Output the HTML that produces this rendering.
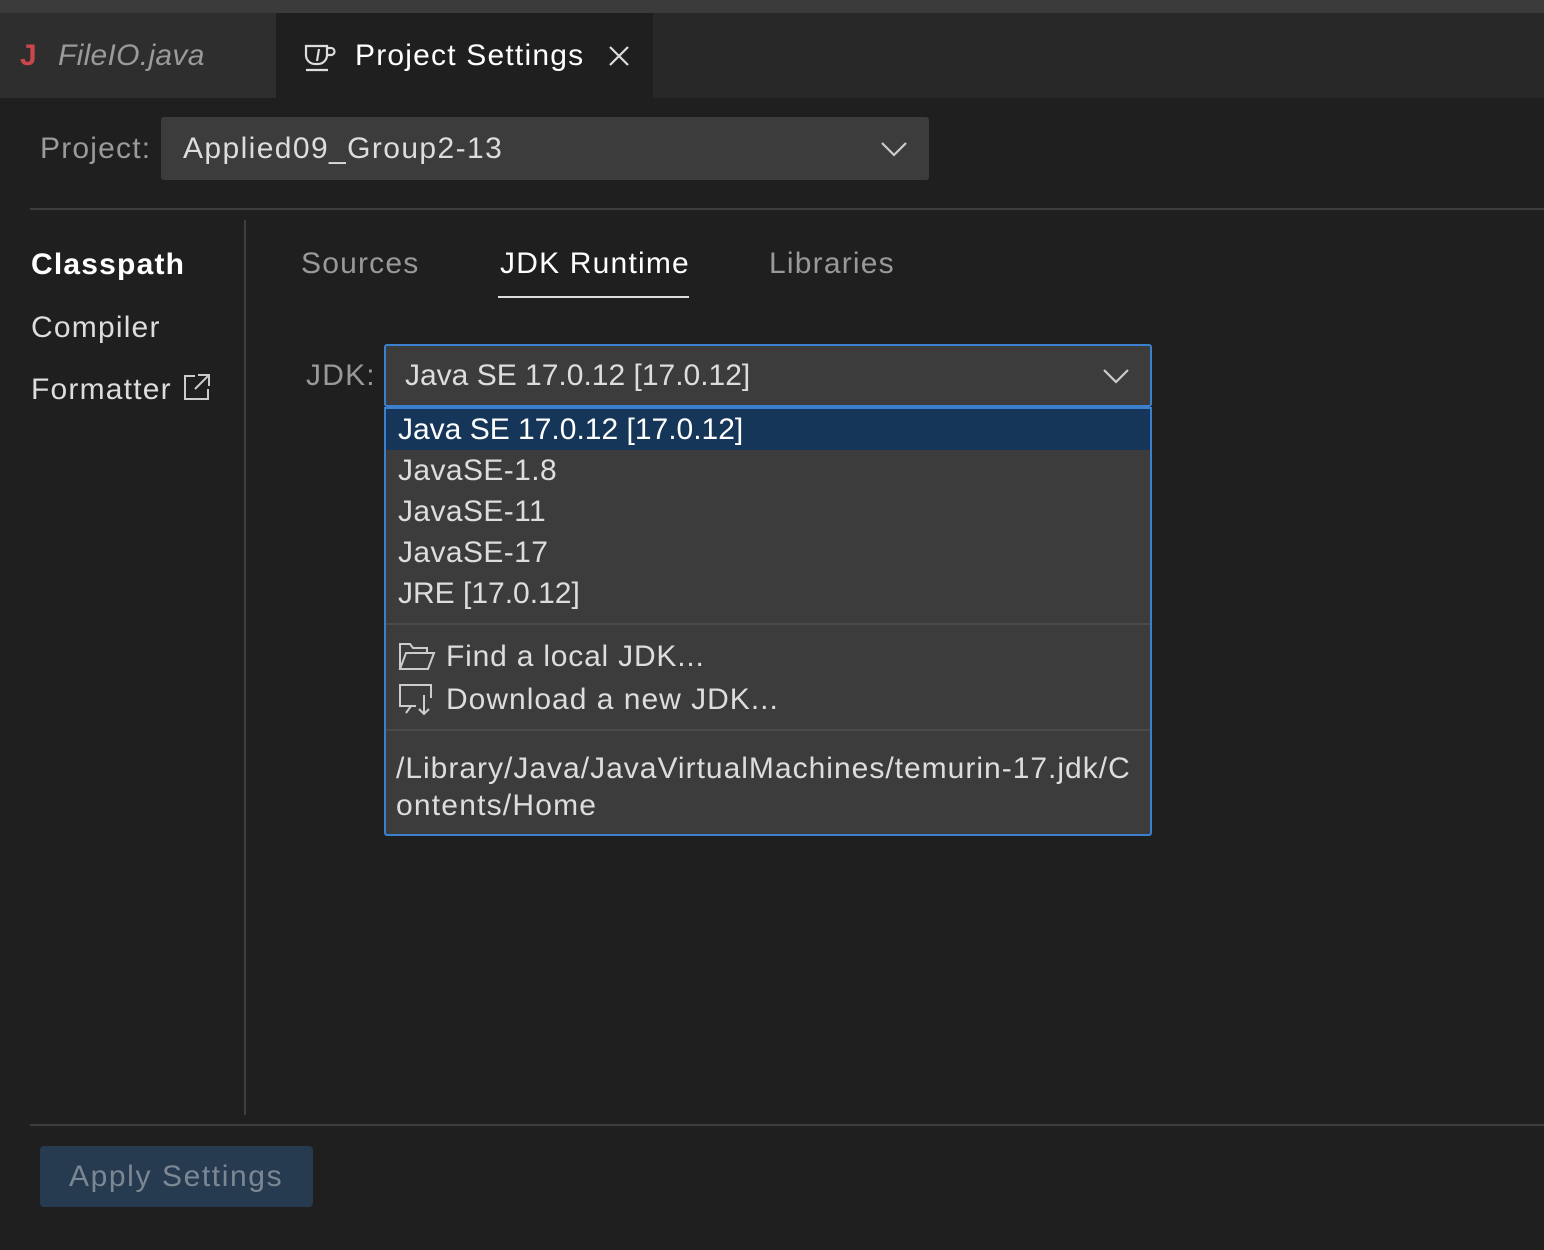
<!DOCTYPE html>
<html><head><meta charset="utf-8"><style>
*{margin:0;padding:0;box-sizing:border-box}
body{width:1544px;height:1250px;background:#1f1f1f;font-family:"Liberation Sans",sans-serif;color:#ccc;position:relative;overflow:hidden}
.a{position:absolute;white-space:nowrap}
.t{font-size:30px;line-height:36px;letter-spacing:1.2px}
</style></head><body>
<div class="a" style="left:0;top:0;width:1544px;height:13px;background:#3b3b3b"></div>
<div class="a" style="left:0;top:13px;width:1544px;height:85px;background:#282828"></div>
<div class="a" style="left:0;top:13px;width:276px;height:85px;background:#2e2e2e"></div>
<div class="a" style="left:276px;top:13px;width:377px;height:85px;background:#1f1f1f"></div>
<div class="a t" style="left:20px;top:38px;color:#c9474a;font-weight:bold">J</div>
<div class="a t" style="left:58px;top:38px;color:#9a9a9a;font-style:italic;letter-spacing:0.3px">FileIO.java</div>
<svg class="a" style="left:303px;top:42px" width="36" height="30" viewBox="0 0 36 30" fill="none" stroke="#ddd" stroke-width="2.2"><path d="M3 4h21v9a9 9 0 0 1-9 9h-3a9 9 0 0 1-9-9z"/><path d="M24 6h4a3 3 0 0 1 0 7h-4"/><path d="M3 28h22"/><path d="M16 7l-2 12"/></svg>
<div class="a t" style="left:355px;top:38px;color:#fff">Project Settings</div>
<svg class="a" style="left:608px;top:45px" width="22" height="22" stroke="#ddd" stroke-width="2.2"><path d="M2 2l18 18M20 2L2 20"/></svg>

<div class="a t" style="left:40px;top:131px;color:#9a9a9a">Project:</div>
<div class="a" style="left:161px;top:117px;width:768px;height:63px;background:#3c3c3c;border-radius:3px"></div>
<div class="a t" style="left:183px;top:131px;color:#ddd;letter-spacing:1.4px">Applied09_Group2-13</div>
<svg class="a" style="left:880px;top:140px" width="28" height="18" fill="none" stroke="#ccc" stroke-width="2.2"><path d="M2 3l12 12L26 3"/></svg>
<div class="a" style="left:30px;top:208px;width:1514px;height:2px;background:#3e3e3e"></div>
<div class="a" style="left:244px;top:220px;width:2px;height:895px;background:#3e3e3e"></div>

<div class="a t" style="left:31px;top:247px;color:#fff;font-weight:bold">Classpath</div>
<div class="a t" style="left:31px;top:310px;color:#ddd">Compiler</div>
<div class="a t" style="left:31px;top:372px;color:#ddd">Formatter</div>
<svg class="a" style="left:183px;top:373px" width="28" height="28" fill="none" stroke="#ccc" stroke-width="2"><path d="M12 3H2v23h23V16M15 2h11v11M26 2L12 16"/></svg>

<div class="a t" style="left:301px;top:246px;color:#999">Sources</div>
<div class="a t" style="left:500px;top:246px;color:#fff">JDK Runtime</div>
<div class="a" style="left:498px;top:296px;width:191px;height:2px;background:#ddd"></div>
<div class="a t" style="left:769px;top:246px;color:#999">Libraries</div>

<div class="a t" style="left:306px;top:358px;color:#999">JDK:</div>
<div class="a" style="left:384px;top:344px;width:768px;height:63px;background:#3c3c3c;border:2px solid #3b7fcf;border-radius:3px"></div>
<div class="a t" style="left:405px;top:358px;color:#ddd;letter-spacing:0px">Java SE 17.0.12 [17.0.12]</div>
<svg class="a" style="left:1102px;top:367px" width="28" height="18" fill="none" stroke="#ccc" stroke-width="2.2"><path d="M2 3l12 12L26 3"/></svg>

<div class="a" style="left:384px;top:407px;width:768px;height:429px;background:#3c3c3c;border:2px solid #3b7fcf;border-radius:0 0 3px 3px"></div>
<div class="a" style="left:386px;top:409px;width:764px;height:41px;background:#163659"></div>
<div class="a t" style="left:398px;top:412px;color:#fff;letter-spacing:0px">Java SE 17.0.12 [17.0.12]</div>
<div class="a t" style="left:398px;top:453px;color:#ddd;letter-spacing:0.4px">JavaSE-1.8</div>
<div class="a t" style="left:398px;top:494px;color:#ddd;letter-spacing:0.4px">JavaSE-11</div>
<div class="a t" style="left:398px;top:535px;color:#ddd;letter-spacing:0.4px">JavaSE-17</div>
<div class="a t" style="left:398px;top:576px;color:#ddd;letter-spacing:0px">JRE [17.0.12]</div>
<div class="a" style="left:386px;top:623px;width:764px;height:2px;background:#4a4a4a"></div>
<svg class="a" style="left:398px;top:641px" width="38" height="32" fill="none" stroke="#ccc" stroke-width="2"><path d="M2 28V3h10l3 4h14v5"/><path d="M2 28l6-16h28l-6 16z"/></svg>
<div class="a t" style="left:446px;top:639px;color:#ddd;letter-spacing:0.8px">Find a local JDK...</div>
<svg class="a" style="left:398px;top:683px" width="38" height="34" fill="none" stroke="#ccc" stroke-width="2"><path d="M14 23H2V2h31v13"/><path d="M8 30l5-7h5"/><path d="M26 12v19M21 26l5 5 5-5"/></svg>
<div class="a t" style="left:446px;top:682px;color:#ddd;letter-spacing:1px">Download a new JDK...</div>
<div class="a" style="left:386px;top:729px;width:764px;height:2px;background:#4a4a4a"></div>
<div class="a t" style="left:396px;top:751px;color:#ddd;letter-spacing:1px">/Library/Java/JavaVirtualMachines/temurin-17.jdk/C</div>
<div class="a t" style="left:396px;top:788px;color:#ddd">ontents/Home</div>

<div class="a" style="left:30px;top:1124px;width:1514px;height:2px;background:#3e3e3e"></div>
<div class="a" style="left:40px;top:1146px;width:273px;height:61px;background:#263a50;border-radius:4px"></div>
<div class="a t" style="left:69px;top:1159px;color:#7c8794;letter-spacing:1.6px">Apply Settings</div>
</body></html>
